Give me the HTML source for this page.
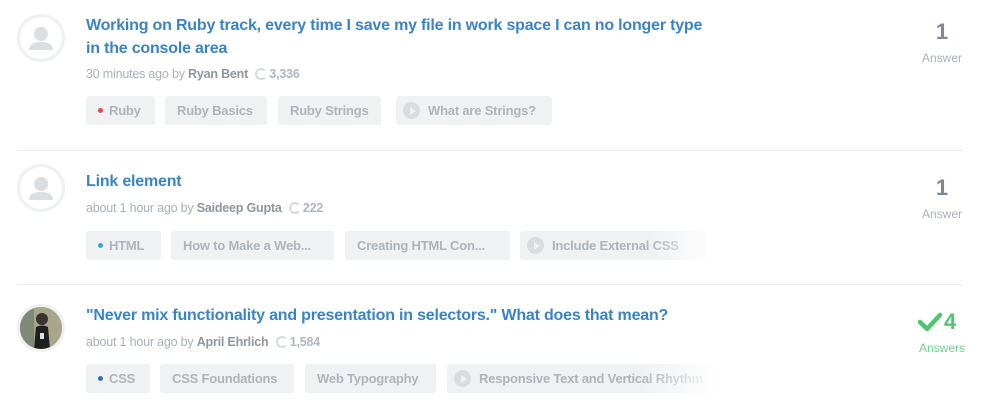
<!DOCTYPE html>
<html><head><meta charset="utf-8"><style>
body{margin:0;width:981px;height:414px;background:#fff;font-family:"Liberation Sans",Arial,sans-serif;position:relative;overflow:hidden}
.a{position:absolute}
.av{position:absolute;left:17px;width:42px;height:42px;border:3px solid #eef0f2;border-radius:50%;background:#fff;overflow:hidden}
.t{position:absolute;left:86px;font-size:16px;font-weight:bold;color:#3b84c4;line-height:23px;white-space:nowrap;letter-spacing:-0.2px}
.m{position:absolute;left:86px;font-size:12.5px;color:#a9b0b7;white-space:nowrap;letter-spacing:-0.2px}
.m b{color:#8e969e}
.ring{display:inline-block;width:8px;height:8px;border:2px solid #d5d9dd;border-right-color:transparent;border-radius:50%;vertical-align:-2px;margin:0 2px 0 4px}
.tag{position:absolute;height:29px;line-height:29px;background:#f0f1f3;border-radius:3px;font-size:13px;font-weight:bold;color:#adb4bb;padding-left:12px;white-space:nowrap;overflow:hidden;letter-spacing:-0.2px}
.dot{display:inline-block;width:5px;height:5px;border-radius:50%;margin-right:6px;vertical-align:2px}
.play{display:inline-block;width:17px;height:17px;border-radius:50%;background:#d8dcdf;vertical-align:-4px;margin-right:8px;position:relative}
.play:after{content:"";position:absolute;left:7px;top:4.5px;border-left:6px solid #f0f1f3;border-top:4px solid transparent;border-bottom:4px solid transparent}
.fade{position:absolute;left:640px;width:70px;height:32px;background:linear-gradient(to right,rgba(255,255,255,0),#fff)}
.n{position:absolute;left:900px;width:84px;text-align:center;font-size:22px;font-weight:bold;color:#7f8993}
.l{position:absolute;left:900px;width:84px;text-align:center;font-size:12px;color:#a9b0b7}
.hr{position:absolute;left:17px;width:945px;height:1px;background:#e9ebed}
</style></head><body>
<div class="av" style="top:14px"><svg width="42" height="42"><circle cx="21" cy="17" r="7" fill="#dcdfe2"/><path d="M9 33 Q9 25 21 25 Q33 25 33 33Z" fill="#dcdfe2"/></svg></div>
<div class="t" style="top:14px">Working on Ruby track, every time I save my file in work space I can no longer type</div>
<div class="t" style="top:37px">in the console area</div>
<div class="m" style="top:67px">30 minutes ago by <b>Ryan Bent</b> <span class="ring"></span><b style="color:#b0b7be">3,336</b></div>
<div class="tag" style="top:96px;left:86px;width:57px"><span class="dot" style="background:#e14d4d"></span>Ruby</div>
<div class="tag" style="top:96px;left:165px;width:90px">Ruby Basics</div>
<div class="tag" style="top:96px;left:278px;width:91px">Ruby Strings</div>
<div class="tag" style="top:96px;left:396px;width:149px;padding-left:7px"><span class="play"></span>What are Strings?</div>
<div class="n" style="top:19px">1</div><div class="l" style="top:51px">Answer</div>
<div class="hr" style="top:150px"></div>

<div class="av" style="top:164px"><svg width="42" height="42"><circle cx="21" cy="17" r="7" fill="#dcdfe2"/><path d="M9 33 Q9 25 21 25 Q33 25 33 33Z" fill="#dcdfe2"/></svg></div>
<div class="t" style="top:170px">Link element</div>
<div class="m" style="top:201px">about 1 hour ago by <b>Saideep Gupta</b> <span class="ring"></span><b style="color:#b0b7be">222</b></div>
<div class="tag" style="top:231px;left:86px;width:63px"><span class="dot" style="background:#3aa7d6"></span>HTML</div>
<div class="tag" style="top:231px;left:171px;width:151px">How to Make a Web...</div>
<div class="tag" style="top:231px;left:345px;width:153px">Creating HTML Con...</div>
<div class="tag" style="top:231px;left:520px;width:180px;padding-left:7px"><span class="play"></span>Include External CSS</div>
<div class="fade" style="top:229px;left:650px"></div>
<div class="n" style="top:175px">1</div><div class="l" style="top:207px">Answer</div>
<div class="hr" style="top:284px"></div>

<div class="av" style="top:304px;background:#8a8f7d"><svg width="42" height="42"><rect width="42" height="42" fill="#a7a58c"/><rect x="0" y="0" width="14" height="42" fill="#7d8a76"/><circle cx="22" cy="12" r="6" fill="#3a3430"/><path d="M14 42 L16 20 Q22 17 28 20 L30 42Z" fill="#1f1f1f"/><rect x="20" y="26" width="4" height="6" fill="#ddd"/></svg></div>
<div class="t" style="top:304px">"Never mix functionality and presentation in selectors." What does that mean?</div>
<div class="m" style="top:335px">about 1 hour ago by <b>April Ehrlich</b> <span class="ring"></span><b style="color:#b0b7be">1,584</b></div>
<div class="tag" style="top:364px;left:86px;width:52px"><span class="dot" style="background:#2f72b3"></span>CSS</div>
<div class="tag" style="top:364px;left:160px;width:122px">CSS Foundations</div>
<div class="tag" style="top:364px;left:305px;width:119px">Web Typography</div>
<div class="tag" style="top:364px;left:447px;width:260px;padding-left:7px"><span class="play"></span>Responsive Text and Vertical Rhythm</div>
<div class="fade" style="top:362px;left:640px;width:80px"></div>
<svg class="a" style="left:918px;top:312px" width="24" height="20"><path d="M2 10 L9 17 L22 3" fill="none" stroke="#4cc66f" stroke-width="4.5" stroke-linecap="round" stroke-linejoin="round"/></svg>
<div class="a" style="left:944px;top:309px;font-size:22px;font-weight:bold;color:#4cc66f">4</div>
<div class="l" style="top:341px;color:#6fd38c">Answers</div>
</body></html>
